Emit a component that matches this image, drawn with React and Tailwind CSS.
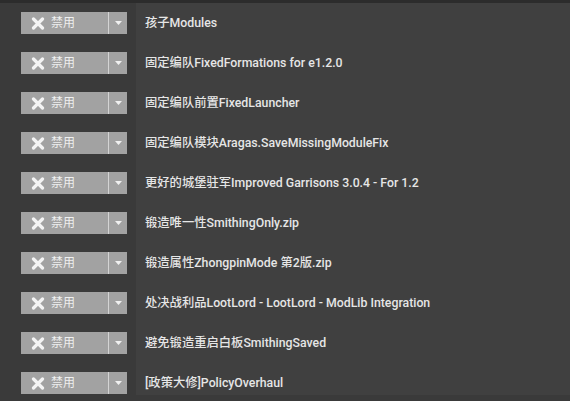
import React from "react";

const mods = [
  "孩子Modules",
  "固定编队FixedFormations for e1.2.0",
  "固定编队前置FixedLauncher",
  "固定编队模块Aragas.SaveMissingModuleFix",
  "更好的城堡驻军Improved Garrisons 3.0.4 - For 1.2",
  "锻造唯一性SmithingOnly.zip",
  "锻造属性ZhongpinMode 第2版.zip",
  "处决战利品LootLord - LootLord - ModLib Integration",
  "避免锻造重启白板SmithingSaved",
  "[政策大修]PolicyOverhaul",
];

function DisableButton() {
  return (
    <div className="flex h-[22px] w-[106px] bg-[#a2a2a2]">
      <div className="flex flex-1 items-center pl-[10px] gap-[6px]">
        <svg width="14" height="13" viewBox="0 0 14 13">
          <path
            d="M2.5 2 L11.5 11 M11.5 2 L2.5 11"
            stroke="#f4f4f4"
            strokeWidth="3.2"
            strokeLinecap="round"
          />
        </svg>
        <span className="text-[12px] text-[#efefef] leading-none">禁用</span>
      </div>
      <div className="w-px bg-[#d4d4d4]" />
      <div className="flex w-[18px] items-center justify-center">
        <svg width="7" height="4" viewBox="0 0 7 4">
          <path d="M0 0 L7 0 L3.5 4 Z" fill="#f0f0f0" />
        </svg>
      </div>
    </div>
  );
}

export default function App() {
  return (
    <div
      className="h-[401px] w-[570px] overflow-hidden bg-[#3a3a3a]"
      style={{ fontFamily: 'Roboto, "Noto Sans CJK SC", sans-serif' }}
    >
      <div className="h-[3px] bg-[#2c2c2c]" />
      <div className="flex">
        <div className="flex w-[136px] flex-col">
          {mods.map((m) => (
            <div key={m} className="flex h-[40px] items-center pl-[21px]">
              <DisableButton />
            </div>
          ))}
        </div>
        <div className="flex h-[392px] flex-1 flex-col overflow-hidden bg-[#404040]">
          {mods.map((m) => (
            <div
              key={m}
              className="flex h-[40px] shrink-0 items-center pl-[9px] text-[12.3px] font-medium text-[#e6e6e6]"
            >
              {m}
            </div>
          ))}
        </div>
      </div>
    </div>
  );
}
